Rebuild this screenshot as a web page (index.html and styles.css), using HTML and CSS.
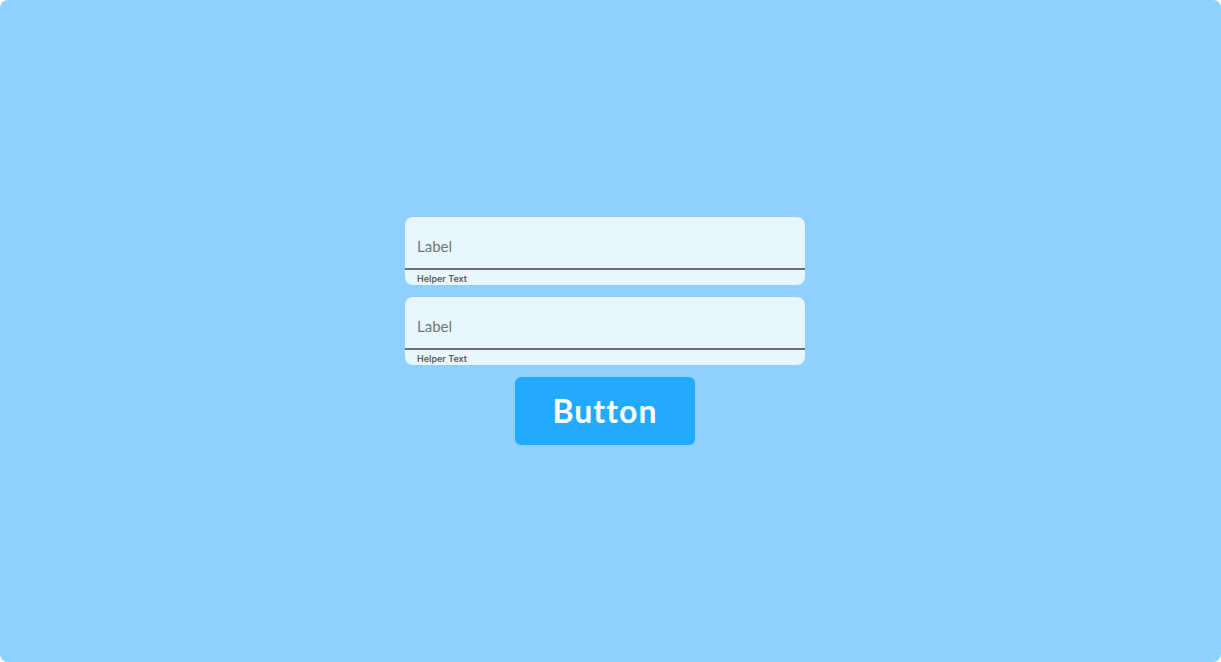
FILE: index.html
```html
<!DOCTYPE html>
<html>
<head>
    <title>Form</title>
    <link rel="stylesheet" href="styles.css">
</head>
<body>
    <div class="screen">
        <div class="form">
            <div class="field">
                <div class="field-input">Label</div>
                <div class="field-helper">Helper Text</div>
            </div>
            <div class="field">
                <div class="field-input">Label</div>
                <div class="field-helper">Helper Text</div>
            </div>
            <button class="button">Button</button>
        </div>
    </div>
</body>
</html>
```

FILE: styles.css
```css
html, body {
    margin: 0;
    padding: 0;
    background: #ffffff;
}

.screen {
    width: 1221px;
    height: 662px;
    box-sizing: border-box;
    padding-right: 11px;
    background: #8ed1fc;
    border-radius: 8px;
    display: flex;
    align-items: center;
    justify-content: center;
}

.form {
    display: flex;
    flex-direction: column;
    align-items: center;
    gap: 12px;
}

.field {
    width: 400px;
    height: 68px;
    background: #e8f6fd;
    border-radius: 8px;
    overflow: hidden;
    display: flex;
    flex-direction: column;
}

.field-input {
    height: 53px;
    box-sizing: border-box;
    padding: 19px 12px 0;
    border-bottom: 2px solid #6b6f78;
    font-family: Lato, sans-serif;
    font-size: 15px;
    line-height: 20px;
    color: #6f7681;
}

.field-helper {
    padding: 2px 12px 0;
    font-family: Inter, "Open Sans", sans-serif;
    font-size: 9px;
    font-weight: 600;
    line-height: 13px;
    color: #5d6068;
}

.button {
    width: 180px;
    height: 68px;
    background: #22aaff;
    border: none;
    border-radius: 6px;
    color: #ffffff;
    font-family: Lato, sans-serif;
    font-weight: bold;
    font-size: 32px;
    line-height: 1;
    letter-spacing: 1px;
    cursor: pointer;
    padding: 0;
}
```
